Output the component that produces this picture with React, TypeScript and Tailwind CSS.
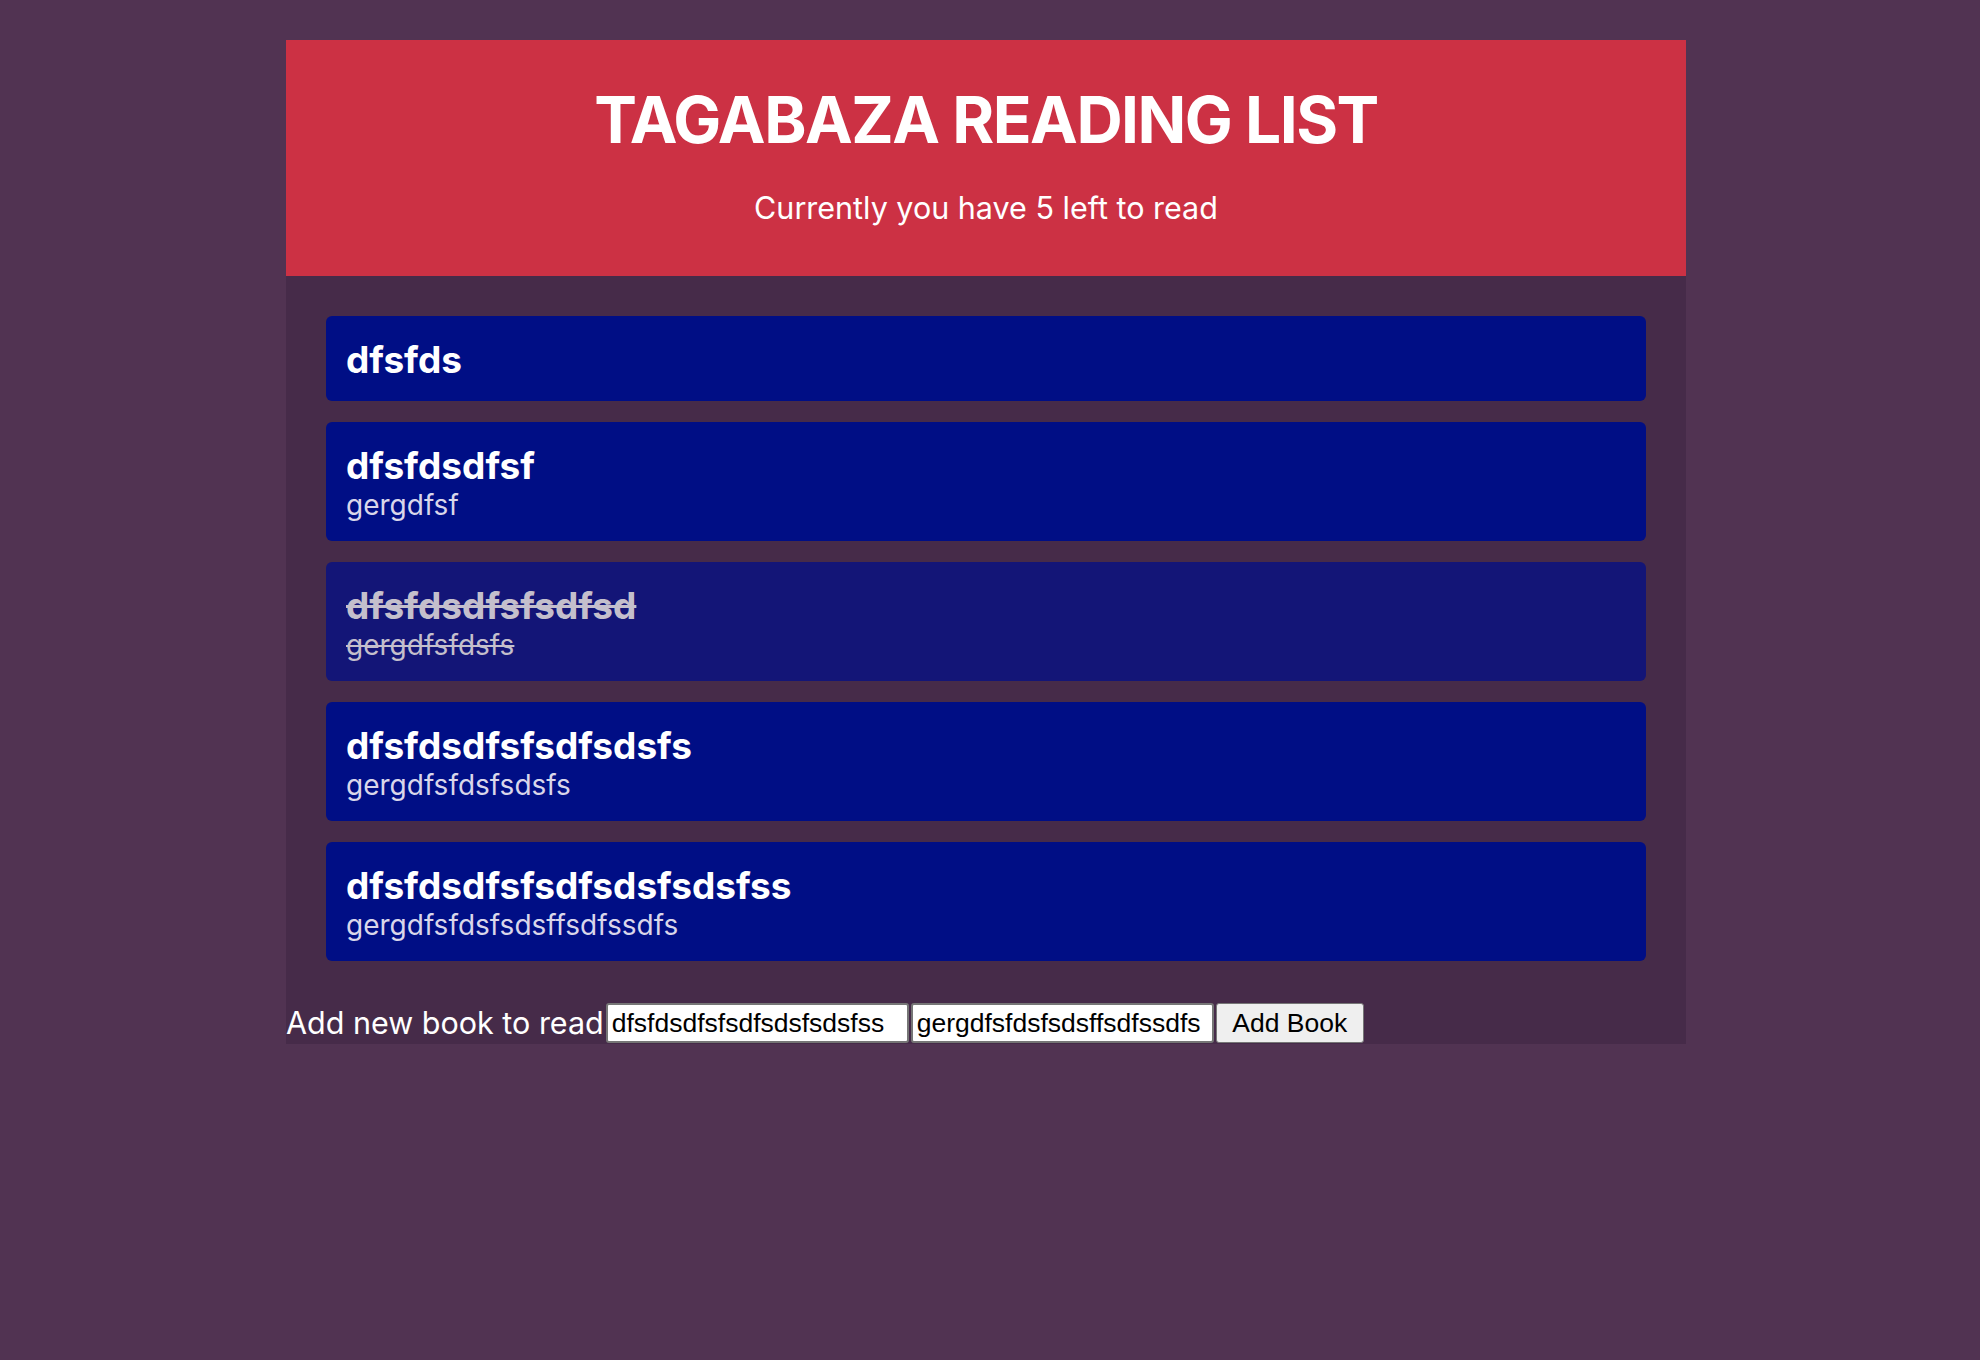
import React, { useState } from 'react';

type Book = { title: string; author: string; done: boolean };

const initialBooks: Book[] = [
  { title: 'dfsfds', author: '', done: false },
  { title: 'dfsfdsdfsf', author: 'gergdfsf', done: false },
  { title: 'dfsfdsdfsfsdfsd', author: 'gergdfsfdsfs', done: true },
  { title: 'dfsfdsdfsfsdfsdsfs', author: 'gergdfsfdsfsdsfs', done: false },
  { title: 'dfsfdsdfsfsdfsdsfsdsfss', author: 'gergdfsfdsfsdsffsdfssdfs', done: false },
];

const App: React.FC = () => {
  const [books, setBooks] = useState<Book[]>(initialBooks);
  const [newBook, setNewBook] = useState({ title: 'dfsfdsdfsfsdfsdsfsdsfss', author: 'gergdfsfdsfsdsffsdfssdfs' });

  const left = books.filter(b => !b.done).length + 1;

  const toggle = (i: number) => {
    setBooks(books.map((b, idx) => (idx === i ? { ...b, done: !b.done } : b)));
  };

  const handleAdd = () => {
    if (!newBook.title) return;
    setBooks([...books, { ...newBook, done: false }]);
  };

  return (
    <div className="min-h-[1360px] bg-[#513352] pt-[40px] font-['Inter',sans-serif]">
      <div className="ml-[286px] w-[1400px] bg-[#462b49]">
        <header className="bg-[#cc3144] pt-[41px] pb-[51px] text-center text-white">
          <h1 className="text-[64px] font-bold leading-[77px] tracking-[-1.5px]">TAGABAZA READING LIST</h1>
          <p className="mt-[32px] text-[30.5px] leading-[35px]">Currently you have {left} left to read</p>
        </header>

        <ul className="flex flex-col gap-[21px] p-[40px]">
          {books.map((book, i) => (
            <li
              key={i}
              onClick={() => toggle(i)}
              className={
                book.done
                  ? 'cursor-pointer rounded-[6px] bg-[#131577] px-[20px] pt-[21px] pb-[19px] text-[#c4bfcc] line-through'
                  : 'cursor-pointer rounded-[6px] bg-[#000e85] px-[20px] pt-[21px] pb-[19px] text-white'
              }
            >
              <div className="text-[37px] font-bold leading-[45px]">{book.title}</div>
              {book.author && (
                <div className={book.done ? 'text-[28px] leading-[34px]' : 'text-[28px] leading-[34px] text-[#d9d6ea]'}>
                  {book.author}
                </div>
              )}
            </li>
          ))}
        </ul>

        <div className="flex h-[43px] items-center pt-[1px] text-[30.5px] leading-[36px] text-white">
          <span>Add new book to read</span>
          <input
            type="text"
            value={newBook.title}
            onChange={e => setNewBook({ ...newBook, title: e.target.value })}
            className="ml-[2px] h-[40px] w-[303px] rounded-[3px] border-2 border-[#767676] bg-white px-[4px] font-['Liberation_Sans',Arial,sans-serif] text-[26.5px] text-black"
          />
          <input
            type="text"
            value={newBook.author}
            onChange={e => setNewBook({ ...newBook, author: e.target.value })}
            className="ml-[2px] h-[40px] w-[303px] rounded-[3px] border-2 border-[#767676] bg-white px-[4px] font-['Liberation_Sans',Arial,sans-serif] text-[26.5px] text-black"
          />
          <button
            onClick={handleAdd}
            className="ml-[2px] h-[40px] w-[148px] rounded-[3px] border border-[#767676] bg-[#efefef] font-['Liberation_Sans',Arial,sans-serif] text-[26.5px] text-black"
          >
            Add Book
          </button>
        </div>
      </div>
    </div>
  );
};

export default App;
